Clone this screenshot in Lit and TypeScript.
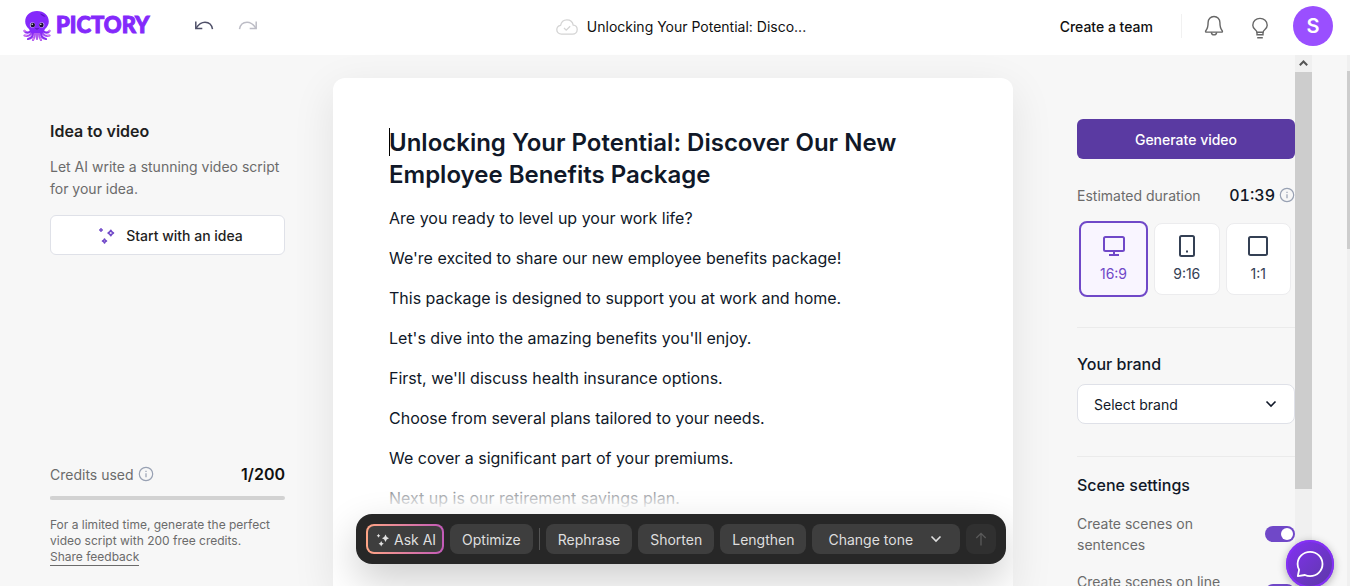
import { LitElement, html, css, svg } from "lit";
import { customElement, state } from "lit/decorators.js";

const octopus = svg`
  <svg width="28" height="30" viewBox="0 0 28 30" aria-hidden="true">
    <g fill="none" stroke-linecap="round" stroke-width="2.2">
      <path d="M8 20C6 22 3 22.500 1.500 20" stroke="#8a2df2"/>
      <path d="M20 20c2 2 5 2.500 6.500 0" stroke="#8a2df2"/>
      <path d="M9 21c-1 3-4 4.500-7.500 3.500" stroke="#a44bf5"/>
      <path d="M19 21c1 3 4 4.500 7.500 3.500" stroke="#a44bf5"/>
      <path d="M10 22c0 3-2 5.500-5 6" stroke="#8a2df2"/>
      <path d="M18 22c0 3 2 5.500 5 6" stroke="#8a2df2"/>
      <path d="M12 22c0 3-.5 5-2 7M16 22c0 3 .5 5 2 7M14 22v6" stroke="#b05af0"/>
      <path d="M1.500 19.500l.5 1M26.500 19.500l-.5 1M2 24.500l1.500 0M26 24.500l-1.500 0M10 28.500l.5-.8M18 28.500l-.5-.8" stroke="#dc7bea" stroke-width="1.400"/>
    </g>
    <path d="M14 0C7 0 2.200 4.600 2.200 10.500c0 3.200 1.600 5.300 3.300 7 1.300 1.300 1.500 3.500 2.500 4.500h12c1-1 1.200-3.200 2.500-4.500 1.700-1.700 3.300-3.800 3.300-7C25.800 4.600 21 0 14 0z" fill="#8429fb"/>
    <path d="M17 2.500c2.500.4 4.500 1.600 5.500 3.200-1.800.2-4.500-1-5.500-3.200z" fill="#5d13c4"/>
    <circle cx="9.500" cy="14" r="2.700" fill="#c9a8ff"/><circle cx="18.700" cy="14" r="2.700" fill="#c9a8ff"/>
    <circle cx="9.800" cy="14" r="2.200" fill="#1b1030"/><circle cx="18.400" cy="14" r="2.200" fill="#1b1030"/>
    <circle cx="9.200" cy="13.200" r=".7" fill="#fff"/><circle cx="17.800" cy="13.200" r=".7" fill="#fff"/>
    <path d="M12.500 17.500q1.500 1.200 3 0" fill="none" stroke="#3a0f80" stroke-width=".8"/>
  </svg>`;

const undo = svg`
  <svg width="20" height="12" viewBox="0 0 20 12" fill="none" stroke="currentColor" stroke-width="1.500" aria-hidden="true">
    <path d="M1.800 1.500v7h6.500"/><path d="M2.200 8C4.500 4.500 7.300 2.200 11 2.200c4 0 6.800 2.600 7.500 7"/>
  </svg>`;

const redo = svg`
  <svg width="20" height="12" viewBox="0 0 20 12" fill="none" stroke="currentColor" stroke-width="1.500" aria-hidden="true">
    <path d="M18.200 1.500v7h-6.500"/><path d="M17.800 8C15.500 4.500 12.700 2.200 9 2.200c-4 0-6.800 2.600-7.500 7"/>
  </svg>`;

const cloud = svg`
  <svg width="22" height="16" viewBox="0 0 22 16" fill="none" stroke="#d4d4d4" stroke-width="1.300" aria-hidden="true">
    <path d="M5.500 15.200C2.800 15.200.8 13.200.8 10.700c0-2.300 1.600-4 3.800-4.400C5.200 3.100 7.700.8 10.900.8c3.300 0 5.800 2.300 6.300 5.400 2.300.2 4 2.100 4 4.400 0 2.600-2 4.600-4.600 4.600z"/>
    <path d="M8 9l2.200 2.200 4-4"/>
  </svg>`;

const bell = svg`
  <svg width="20" height="22" viewBox="0 0 20 22" fill="none" stroke="#666" stroke-width="1.400" stroke-linejoin="round" aria-hidden="true">
    <path d="M10 1.500c-3.500 0-5.900 2.600-5.900 6 0 4-.6 6.300-2.300 8.200-.5.600-.2 1.400.6 1.400h15.200c.8 0 1.100-.8.600-1.400-1.700-1.900-2.300-4.200-2.300-8.200 0-3.400-2.400-6-5.900-6z"/>
    <path d="M7.300 17.300c.3 1.600 1.300 2.600 2.700 2.600s2.400-1 2.700-2.600"/>
  </svg>`;

const bulb = svg`
  <svg width="18" height="22" viewBox="0 0 18 22" fill="none" stroke="#666" stroke-width="1.400" aria-hidden="true">
    <path d="M6 15.300c-.2-1-.8-1.700-1.700-2.500C2.700 11.500 1.800 10 1.800 8.200 1.800 4.300 5 1.400 9 1.400s7.200 2.900 7.200 6.800c0 1.800-.9 3.300-2.500 4.600-.9.800-1.500 1.500-1.700 2.500z"/>
    <path d="M6 15v2.800h6V15M6.200 20.700h5.600"/>
  </svg>`;

const info = svg`
  <svg class="info" width="16" height="16" viewBox="0 0 16 16" fill="none" stroke="#98a1b3" stroke-width="1.200" aria-hidden="true">
    <circle cx="8" cy="8" r="6.700"/><path d="M8 7.200v4M8 4.800v1.300"/>
  </svg>`;

const sparkOutline = svg`
  <svg width="18" height="18" viewBox="0 0 18 18" fill="none" stroke="#7048c8" stroke-width="1.600" stroke-linejoin="round" aria-hidden="true">
    <path d="M12.800 3.300q.8 1.900 2.700 2.700-1.900.8-2.700 2.700-.8-1.900-2.700-2.700 1.900-.8 2.700-2.700zM6.500 12q.5 1.500 2 2-1.500.5-2 2-.5-1.500-2-2 1.500-.5 2-2z"/>
    <path d="M3 1l.7 1.300L5 3l-1.300.7L3 5l-.7-1.300L1 3l1.300-.7z" fill="#7048c8" stroke-width=".6"/>
  </svg>`;

const sparkFilled = svg`
  <svg width="14" height="14" viewBox="0 0 14 14" fill="#e2e2e2" aria-hidden="true">
    <path d="M9.500 1.500q.7 3 3.500 3.700-2.800.8-3.500 3.800Q8.800 6 6 5.200q2.800-.7 3.500-3.700zM5.200 8q.4 2.300 2.600 2.800-2.200.6-2.600 2.700-.4-2.100-2.600-2.700Q4.800 10.300 5.200 8zM2.500.8Q2.800 2.400 4.300 2.700 2.800 3 2.500 4.700 2.200 3 .7 2.700 2.200 2.400 2.500.8z"/>
  </svg>`;

const chevron = svg`
  <svg class="chevron" width="12" height="8" viewBox="0 0 12 8" fill="none" stroke="currentColor" stroke-width="1.600" aria-hidden="true">
    <path d="M1.500 1.500L6 6l4.500-4.500"/>
  </svg>`;

const arrowUp = svg`
  <svg width="12" height="14" viewBox="0 0 12 14" fill="none" stroke="#5a5a5a" stroke-width="1.300" aria-hidden="true">
    <path d="M6 13.500v-12M1.300 6L6 1.300 10.700 6"/>
  </svg>`;

const monitor = svg`
  <svg width="24" height="24" viewBox="0 0 24 24" fill="none" stroke="currentColor" stroke-width="2" aria-hidden="true">
    <rect x="2" y="3" width="20" height="14" rx="1.500"/><path d="M12 17v4M7 21h10"/>
  </svg>`;

const phone = svg`
  <svg width="24" height="24" viewBox="0 0 24 24" fill="none" stroke="currentColor" stroke-width="2" aria-hidden="true">
    <rect x="5" y="2" width="14" height="20" rx="1.500"/><path d="M11 17.500h2"/>
  </svg>`;

const square = svg`
  <svg width="24" height="24" viewBox="0 0 24 24" fill="none" stroke="currentColor" stroke-width="2" aria-hidden="true">
    <rect x="3" y="3" width="18" height="18" rx="1.500"/>
  </svg>`;

const chat = svg`
  <svg width="28" height="28" viewBox="0 0 28 28" fill="none" stroke="#fff" stroke-width="1.800" stroke-linejoin="round" aria-hidden="true">
    <path d="M1.800 26.200l1.300-6.500C1.900 17.900 1.600 16 1.600 14 1.600 7.200 7.200 1.800 14.100 1.800S26.500 7.200 26.500 14s-5.500 12.200-12.400 12.200c-1.900 0-3.400-.3-5.200-1.200z"/>
  </svg>`;

const lines = [
  "Are you ready to level up your work life?",
  "We're excited to share our new employee benefits package!",
  "This package is designed to support you at work and home.",
  "Let's dive into the amazing benefits you'll enjoy.",
  "First, we'll discuss health insurance options.",
  "Choose from several plans tailored to your needs.",
  "We cover a significant part of your premiums.",
  "Next up is our retirement savings plan.",
];

const ratios = [
  { value: "16:9", icon: monitor },
  { value: "9:16", icon: phone },
  { value: "1:1", icon: square },
];

@customElement("app-root")
export class AppRoot extends LitElement {
  @state() private ratio = "16:9";

  static styles = css`
    :host {
      display: flex;
      flex-direction: column;
      position: relative;
      height: 100vh;
      overflow: hidden;
      background: #f7f7f7;
      color: #101828;
      font: 400 14px/22px Inter, "Liberation Sans", sans-serif;
    }
    * { box-sizing: border-box; }
    h1, h2, p { margin: 0; }
    svg { display: block; flex: none; }
    button, select { font: inherit; color: inherit; cursor: pointer; }
    button { border: 0; background: none; padding: 0; }

    .header {
      display: grid;
      grid-template-columns: 1fr auto 1fr;
      align-items: center;
      flex: none;
      height: 55px;
      padding: 0 17px 3px 23px;
      background: #fff;
    }
    .start, .title, .end { display: flex; align-items: center; }
    .logo { display: flex; align-items: center; gap: 5px; color: #8429fb; text-decoration: none; }
    .word {
      padding-bottom: 2px;
      font-family: Lato, Inter, sans-serif;
      font-size: 22px;
      font-weight: 900;
      -webkit-text-stroke: 1px #8429fb;
    }
    .history { display: flex; gap: 24px; margin-left: 44px; color: #4f5068; }
    .history button:disabled { color: #bdbdc6; }
    .title { gap: 9px; padding: 2px 0 0 6px; color: #101010; }
    .end { justify-content: flex-end; }
    .team { padding-top: 2px; color: #101010; font-weight: 500; text-decoration: none; }
    .rule { width: 1px; height: 24px; margin: 0 22px 0 28px; background: #f1f1f1; }
    .end .bulb { margin: 3px 24px 0 27px; }
    .avatar { width: 40px; height: 40px; border-radius: 50%; background: #9a4fff; color: #fff; font-size: 20px; font-weight: 600; }

    .main { display: flex; flex: 1; min-height: 0; }
    .columns { display: grid; grid-template-columns: 1fr 680px 1fr; flex: 1; min-width: 0; }
    .page-bar { flex: none; width: 4px; padding-top: 16px; border-left: 1px solid #f7f7f7; background: #f0f0f0; }
    .page-bar .thumb { height: 178px; background: #cdcdcd; }

    .left {
      display: flex;
      flex-direction: column;
      justify-content: space-between;
      min-height: 0;
      padding: 64px 48px 20px 50px;
      color: #6b6b6b;
    }
    .heading { font-size: 16px; line-height: 24px; font-weight: 600; color: #1f1f1f; }
    .left .lead { margin: 13px 0 15px; }
    .idea {
      display: flex;
      align-items: center;
      justify-content: center;
      gap: 10px;
      width: 100%;
      height: 40px;
      padding: 2px 0 0 6px;
      border: 1px solid #dfe1e8;
      border-radius: 6px;
      background: #fff;
      color: #1f1f1f;
      font-weight: 500;
    }
    .credits { display: flex; align-items: center; justify-content: space-between; }
    .with-info { display: flex; align-items: center; gap: 4px; }
    .count { color: #101010; font-size: 16px; font-weight: 600; }
    .count, .time, .info { margin-bottom: 2px; }
    .left progress {
      appearance: none;
      display: block;
      width: 100%;
      height: 4px;
      margin: 9px 0 17px;
      border: 0;
      border-radius: 2px;
      background: #d2d2d2;
      overflow: hidden;
    }
    .left progress::-webkit-progress-bar { background: #d2d2d2; }
    .left progress::-webkit-progress-value { background: #d2d2d2; }
    .note { font-size: 12px; line-height: 16px; }
    .note a { display: block; width: fit-content; color: inherit; text-decoration: none; border-bottom: 1px solid #6b6b6b; }

    .center { position: relative; min-height: 0; padding-top: 23px; }
    .editor {
      height: 100%;
      padding: 49px 56px 0;
      border-radius: 12px 12px 0 0;
      background: #fff;
      box-shadow: 0 12px 44px rgba(0, 0, 0, 0.09);
      overflow: hidden;
      font-size: 16px;
      line-height: 24px;
    }
    .editor h1 { position: relative; margin-bottom: 15px; font-size: 24px; line-height: 32px; font-weight: 600; }
    .caret { position: absolute; left: 0; top: 1px; width: 1px; height: 28px; background: #000; }
    .editor p { margin-bottom: 16px; }
    .fade {
      position: absolute;
      inset: auto 0 0 0;
      height: 116px;
      background: linear-gradient(rgba(255, 255, 255, 0), #fff 40px);
      overflow: hidden;
      pointer-events: none;
    }
    .fade::after {
      content: "";
      position: absolute;
      inset: 44px 7px 22px 23px;
      border-radius: 16px;
      box-shadow: 0 16px 40px rgba(0, 0, 0, 0.2);
    }
    .toolbar {
      position: absolute;
      left: 23px;
      right: 7px;
      bottom: 22px;
      display: flex;
      align-items: center;
      gap: 6px;
      height: 50px;
      padding: 10px;
      border-radius: 16px;
      background: #272727;
      color: #dedede;
    }
    .tool { height: 30px; padding: 2px 12px 0; border-radius: 8px; background: #3e3e3e; white-space: nowrap; }
    .ask {
      display: flex;
      align-items: center;
      gap: 4px;
      padding: 2px 6px 0 8px;
      border: 2px solid transparent;
      background:
        linear-gradient(#3e3e3e, #3e3e3e) padding-box,
        linear-gradient(90deg, #ffa585, #c25ab8) border-box;
    }
    .split { width: 1px; height: 22px; background: #555; }
    .pick { position: relative; display: flex; align-items: center; flex: 1; }
    .pick select { appearance: none; width: 100%; border: 0; outline: 0; }
    .pick .chevron { position: absolute; right: 18px; pointer-events: none; }
    .tone select { padding: 2px 16px 0; }
    .send { display: grid; place-items: center; width: 30px; padding: 0; background: #303030; }

    .right { display: flex; min-height: 0; padding: 0 34px 0 64px; }
    .settings { flex: 1; min-width: 0; overflow: hidden; padding-top: 64px; color: #6b6b6b; }
    .generate { width: 100%; height: 40px; padding-top: 2px; border-radius: 6px; background: #5a3aa2; color: #fff; font-weight: 500; }
    .duration { display: flex; align-items: center; justify-content: space-between; height: 22px; margin: 26px 0 14px; }
    .time { color: #101828; font-size: 16px; font-weight: 500; font-variant-numeric: tabular-nums; }
    .ratios { display: flex; align-items: center; gap: 6px; margin: 0; padding: 0 4px 0 2px; border: 0; }
    .ratio {
      display: flex;
      flex-direction: column;
      align-items: center;
      justify-content: center;
      gap: 5px;
      flex: 1;
      height: 72px;
      border: 1px solid #ececee;
      border-radius: 8px;
      background: #fff;
      color: #344054;
      cursor: pointer;
    }
    .ratio.on { flex: none; width: 69px; height: 76px; border: 2px solid #7048c8; background: #f9f5ff; color: #7048c8; }
    .ratio input { position: absolute; opacity: 0; width: 1px; height: 1px; }
    .group { margin-top: 30px; padding-top: 24px; border-top: 1px solid #ebebeb; }
    .group + .group { margin-top: 32px; padding-top: 16px; }
    .group .heading { display: block; font-weight: 500; color: #101828; }
    .brand { margin-top: 8px; color: #101828; }
    .brand select { height: 40px; padding: 2px 16px 0; border: 1px solid #dfe1e8; border-radius: 8px; background: #fff; }
    .toggle { display: flex; align-items: center; justify-content: space-between; gap: 32px; margin-top: 16px; line-height: 21px; cursor: pointer; }
    .toggle span { flex: 1; }
    .toggle input {
      appearance: none;
      flex: none;
      display: flex;
      justify-content: flex-end;
      width: 30px;
      height: 16px;
      margin: 0;
      padding: 2px;
      border-radius: 8px;
      background: #7048c8;
    }
    .toggle input::before { content: ""; width: 12px; height: 12px; border-radius: 50%; background: #fff; }
    .toggle input:not(:checked) { justify-content: flex-start; background: #bbb; }
    .scroll { flex: none; width: 17px; background: #f0f0f0; color: #555; }
    .scroll .up { display: grid; place-items: center; width: 17px; height: 17px; padding-bottom: 2px; }
    .scroll .thumb { height: 417px; background: #cdcdcd; }

    .chat {
      position: absolute;
      right: 16px;
      bottom: -2px;
      display: grid;
      place-items: center;
      width: 48px;
      height: 48px;
      border-radius: 50%;
      background: linear-gradient(135deg, #8430f5, #5a3aa2);
      box-shadow: inset 0 0 0 2px #8430f5, 0 2px 8px rgba(0, 0, 0, 0.3);
    }
  `;

  render() {
    return html`
      <header class="header">
        <div class="start">
          <a class="logo" href="#">${octopus}<span class="word">PICTORY</span></a>
          <div class="history">
            <button aria-label="Undo">${undo}</button>
            <button aria-label="Redo" disabled>${redo}</button>
          </div>
        </div>
        <div class="title">${cloud}<span>Unlocking Your Potential: Disco...</span></div>
        <div class="end">
          <a class="team" href="#">Create a team</a>
          <div class="rule"></div>
          <button aria-label="Notifications">${bell}</button>
          <button class="bulb" aria-label="Tips">${bulb}</button>
          <button class="avatar">S</button>
        </div>
      </header>

      <div class="main">
        <div class="columns">
          <aside class="left">
            <section>
              <h2 class="heading">Idea to video</h2>
              <p class="lead">Let AI write a stunning video script for your idea.</p>
              <button class="idea">${sparkOutline}Start with an idea</button>
            </section>
            <section>
              <div class="credits">
                <label class="with-info" for="credits">Credits used ${info}</label>
                <span class="count">1/200</span>
              </div>
              <progress id="credits" max="200" value="1"></progress>
              <p class="note">
                For a limited time, generate the perfect video script with 200 free credits.
                <a href="#">Share feedback</a>
              </p>
            </section>
          </aside>

          <main class="center">
            <article class="editor">
              <h1><span class="caret"></span>Unlocking Your Potential: Discover Our New Employee Benefits Package</h1>
              ${lines.map((line) => html`<p>${line}</p>`)}
            </article>
            <div class="fade"></div>
            <div class="toolbar">
              <button class="tool ask">${sparkFilled}Ask AI</button>
              <button class="tool">Optimize</button>
              <div class="split"></div>
              <button class="tool">Rephrase</button>
              <button class="tool">Shorten</button>
              <button class="tool">Lengthen</button>
              <div class="pick tone">
                <select class="tool" aria-label="Change tone"><option>Change tone</option></select>
                ${chevron}
              </div>
              <button class="tool send" aria-label="Send" disabled>${arrowUp}</button>
            </div>
          </main>

          <aside class="right">
            <div class="settings">
              <button class="generate">Generate video</button>
              <div class="duration">
                <span>Estimated duration</span>
                <span class="with-info"><span class="time">01:39</span>${info}</span>
              </div>
              <fieldset class="ratios" aria-label="Aspect ratio">
                ${ratios.map(
                  (r) => html`
                    <label class="ratio ${this.ratio === r.value ? "on" : ""}">
                      <input
                        type="radio"
                        name="ratio"
                        .checked=${this.ratio === r.value}
                        @change=${() => (this.ratio = r.value)}
                      />
                      ${r.icon}<span>${r.value}</span>
                    </label>
                  `,
                )}
              </fieldset>
              <section class="group">
                <label class="heading" for="brand">Your brand</label>
                <div class="pick brand">
                  <select id="brand"><option>Select brand</option></select>
                  ${chevron}
                </div>
              </section>
              <section class="group">
                <h2 class="heading">Scene settings</h2>
                <label class="toggle"><span>Create scenes on sentences</span><input type="checkbox" checked /></label>
                <label class="toggle"><span>Create scenes on line breaks</span><input type="checkbox" checked /></label>
              </section>
            </div>
            <div class="scroll" aria-hidden="true">
              <div class="up">
                <svg width="9" height="6" viewBox="0 0 9 6" fill="none" stroke="currentColor" stroke-width="2">
                  <path d="M.8 5.200l3.700-3.700 3.700 3.700" />
                </svg>
              </div>
              <div class="thumb"></div>
            </div>
          </aside>
        </div>
        <div class="page-bar" aria-hidden="true"><div class="thumb"></div></div>
      </div>

      <button class="chat" aria-label="Open chat">${chat}</button>
    `;
  }
}
